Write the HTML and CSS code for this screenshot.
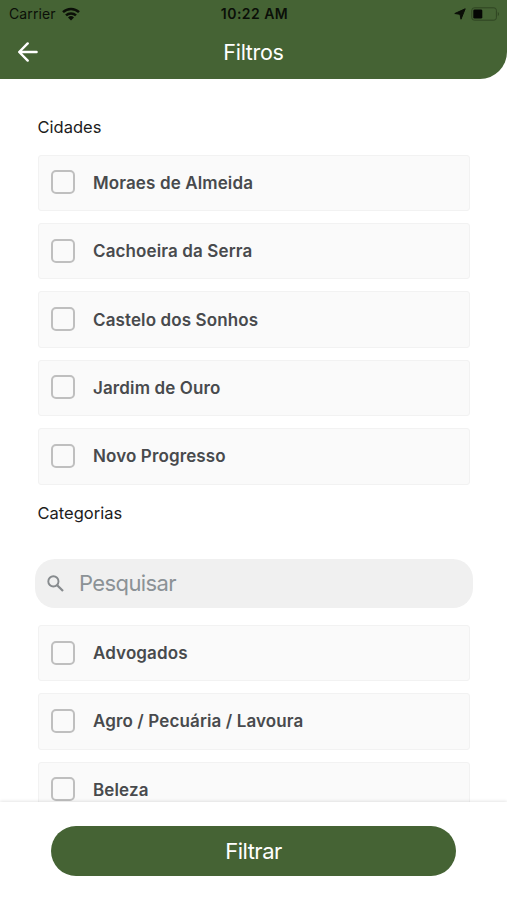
FILE: index.html
```html
<!DOCTYPE html>
<html lang="pt-BR">
<head>
  <meta charset="UTF-8" />
  <meta name="viewport" content="width=device-width, initial-scale=1" />
  <title>Filtros</title>
  <link rel="stylesheet" href="styles.css">
</head>
<body>
  <div class="screen">
    <header class="header">
      <div class="status-bar">
        <div class="status-left">
          <span class="carrier">Carrier</span>
          <svg class="wifi" width="18" height="14" viewBox="0 0 18 14" fill="none" stroke="#0b0f08" stroke-width="2.5">
            <path d="M1 5.1a11.6 11.6 0 0 1 16 0" />
            <path d="M4 8.4a7.3 7.3 0 0 1 10 0" />
            <path d="M9 13.4L6 10.5a4.4 4.4 0 0 1 6 0z" fill="#0b0f08" stroke="none" />
          </svg>
        </div>
        <span class="time">10:22 AM</span>
        <div class="status-right">
          <svg width="12" height="12" viewBox="0 0 12 12"><path d="M11.2 .8L7 11.2 6 6.3.8 5.5z" fill="#0b0f08" stroke="#0b0f08" stroke-linejoin="round" /></svg>
          <svg width="29" height="14" viewBox="0 0 29 14">
            <rect x=".8" y=".8" width="24.6" height="12.4" rx="2.5" fill="none" stroke="#2f4522" />
            <rect x="2.3" y="2.4" width="9" height="9.2" rx="1.4" fill="#050704" />
            <path d="M26.8 5v4c1.6-.6 1.6-3.4 0-4z" fill="#2f4522" />
          </svg>
        </div>
      </div>
      <div class="nav">
        <svg class="back" width="20" height="20" viewBox="0 0 20 20" fill="none" stroke="#fff" stroke-width="2.4" stroke-linecap="round" stroke-linejoin="round">
          <path d="M18.6 10H1.6M9.7 1.4L1.2 10l8.5 8.6" />
        </svg>
        <h1>Filtros</h1>
      </div>
    </header>

    <!-- Filter lists -->
    <main class="content">
      <h2>Cidades</h2>
      <div class="list">
        <div class="option"><span class="box"></span><span class="label">Moraes de Almeida</span></div>
        <div class="option"><span class="box"></span><span class="label">Cachoeira da Serra</span></div>
        <div class="option"><span class="box"></span><span class="label">Castelo dos Sonhos</span></div>
        <div class="option"><span class="box"></span><span class="label">Jardim de Ouro</span></div>
        <div class="option"><span class="box"></span><span class="label">Novo Progresso</span></div>
      </div>

      <h2 class="categories">Categorias</h2>
      <div class="search">
        <svg width="17" height="17" viewBox="0 0 17 17" fill="none" stroke="#878b8e" stroke-width="1.9">
          <circle cx="6.4" cy="6.4" r="5.1" />
          <path d="M10.2 10.2l5.8 5.8" stroke-width="2.3" />
        </svg>
        <span class="placeholder">Pesquisar</span>
      </div>
      <div class="list">
        <div class="option"><span class="box"></span><span class="label">Advogados</span></div>
        <div class="option"><span class="box"></span><span class="label">Agro / Pecuária / Lavoura</span></div>
        <div class="option"><span class="box"></span><span class="label">Beleza</span></div>
      </div>
    </main>

    <footer class="footer">
      <button class="submit">Filtrar</button>
    </footer>
  </div>
</body>
</html>
```
FILE: styles.css
```css
* {
  margin: 0;
  padding: 0;
  box-sizing: border-box;
}

body {
  background: #fff;
  font-family: Inter, sans-serif;
  color: #1c1c1c;
}

.screen {
  display: flex;
  flex-direction: column;
  height: 900px;
  overflow: hidden;
}

/* Header */
.header {
  flex: none;
  height: 78.5px;
  background: #456334;
  border-bottom-right-radius: 27px;
}

.status-bar {
  display: grid;
  grid-template-columns: 1fr auto 1fr;
  align-items: center;
  height: 27px;
  padding: 0 7px 0 9px;
  color: #0b0f08;
}

.status-left,
.status-right {
  display: flex;
  align-items: center;
}

.status-left {
  gap: 6px;
}

.status-right {
  justify-content: flex-end;
  gap: 5px;
}

.carrier {
  font-size: 14px;
  letter-spacing: 0.1px;
}

.time {
  font-size: 14px;
  font-weight: 600;
  letter-spacing: 0.45px;
}

.nav {
  display: grid;
  grid-template-columns: 60px 1fr 60px;
  align-items: center;
  height: 50px;
}

.back {
  margin-left: 18px;
}

h1 {
  font-size: 21.5px;
  font-weight: 400;
  letter-spacing: -0.3px;
  text-align: center;
  color: #fff;
}

/* Content */
.content {
  flex: 1;
  min-height: 0;
  overflow: hidden;
  padding: 38px 37px 0 37.5px;
}

h2 {
  font-size: 16.5px;
  font-weight: 400;
  line-height: 20px;
  margin-bottom: 18px;
}

.list {
  display: flex;
  flex-direction: column;
  gap: 11.9px;
}

.option {
  display: flex;
  align-items: center;
  flex: none;
  gap: 18.5px;
  height: 56.5px;
  padding-left: 12px;
  background: #fafafa;
  border: 1.5px solid #f2f2f2;
  border-radius: 3px;
}

.box {
  width: 24px;
  height: 24px;
  margin-top: -1px;
  border: 2px solid #bfbfbf;
  border-radius: 5px;
}

.label {
  font-size: 17px;
  font-weight: 600;
  letter-spacing: 0.12px;
  color: #484a4d;
}

.categories {
  margin: 18.5px 0 36px;
}

.search {
  display: flex;
  align-items: center;
  gap: 15px;
  height: 48.5px;
  margin: 0 -2.5px 17.2px;
  padding-left: 12px;
  background: #f0f0f0;
  border-radius: 20px;
}

.placeholder {
  font-size: 22px;
  letter-spacing: -0.6px;
  color: #8b9296;
}

/* Footer */
.footer {
  position: relative;
  flex: none;
  height: 98.5px;
  padding: 24.5px 51px 0;
  background: #fff;
  box-shadow: 0 -1px 3px rgba(0, 0, 0, 0.1);
}

.submit {
  display: block;
  width: 100%;
  height: 49.5px;
  padding-top: 1px;
  border: none;
  border-radius: 25px;
  background: #456334;
  color: #fff;
  font-family: inherit;
  font-size: 22px;
  letter-spacing: -0.5px;
}
```
